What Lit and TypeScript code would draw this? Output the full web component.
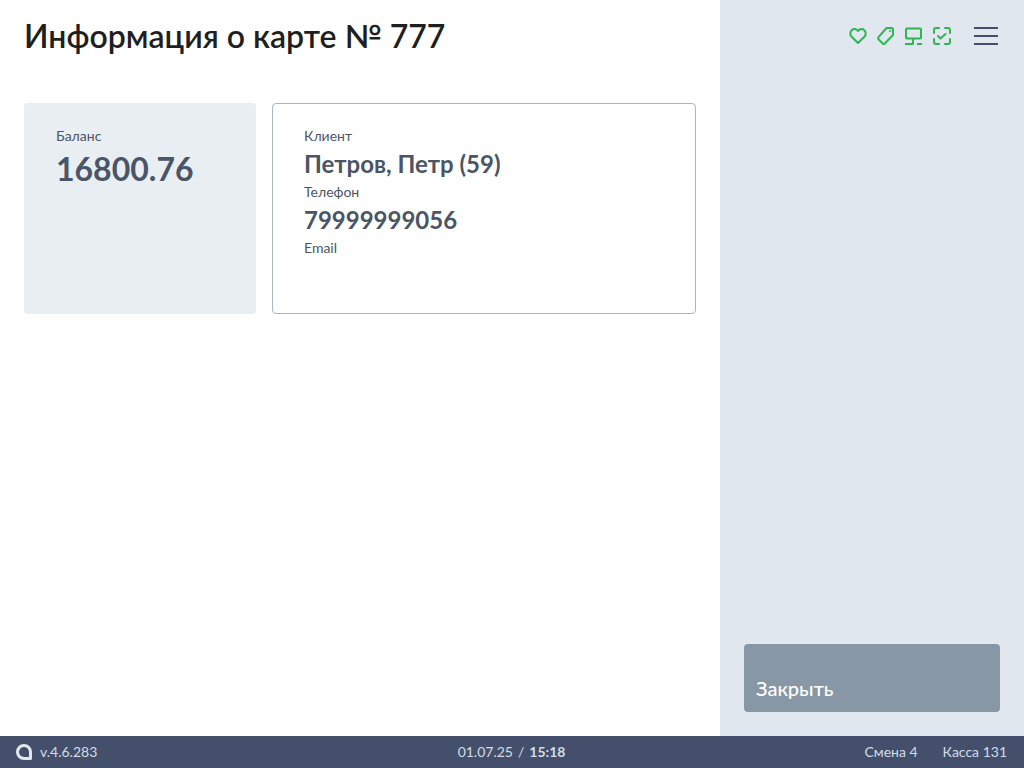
import { LitElement, html, css } from "lit";
import { customElement } from "lit/decorators.js";

@customElement("app-root")
export class AppRoot extends LitElement {
  static styles = css`
    :host { display: flex; flex-direction: column; width: 1024px; height: 768px; font-family: Lato, "Noto Sans", sans-serif; background: #fff; overflow: hidden; }
    .main { flex: 1; display: flex; min-height: 0; }
    .content { flex: 1; padding: 16px 24px; box-sizing: border-box; min-width: 0; }
    h1 { margin: 0 0 47px; font-size: 32px; line-height: 40px; font-weight: 600; color: #1f1f1f; height: 40px; }
    .cards { display: flex; gap: 16px; }
    .card { height: 211px; box-sizing: border-box; border-radius: 4px; padding: 24px 32px; color: #4a5568; }
    .balance { width: 232px; background: #e9eef2; }
    .client { flex: 1; border: 1px solid #a9b7c4; padding: 23px 31px; }
    .label { font-size: 14px; line-height: 18px; }
    .value { font-size: 24px; line-height: 38px; font-weight: 700; }
    .balance .value { font-size: 32px; line-height: 48px; }
    .side { width: 304px; background: #e0e7ef; padding: 24px 26px 24px 24px; box-sizing: border-box; display: flex; flex-direction: column; justify-content: space-between; }
    .top { display: flex; justify-content: flex-end; align-items: center; height: 24px; }
    .icons { display: flex; gap: 8px; margin-right: 22px; }
    svg { display: block; }
    .menu { display: flex; flex-direction: column; gap: 6px; width: 24px; }
    .menu i { display: block; height: 2px; background: #44506b; }
    .close { height: 68px; width: 256px; border-radius: 4px; background: #8797a5; color: #fff; font-size: 20px; line-height: 24px; padding: 32px 12px 12px; box-sizing: border-box; font-weight: 500; }
    .footer { height: 32px; background: #44506b; color: #d3dce6; font-size: 14px; line-height: 32px; display: grid; grid-template-columns: 1fr auto 1fr; align-items: start; padding: 0 17px 0 16px; }
    .ver { display: flex; align-items: center; gap: 8px; height: 32px; }
    .date b { font-weight: 700; }
    .date .sep { margin: 0 5px; }
    .right { display: flex; justify-content: flex-end; gap: 25px; }
  `;

  render() {
    return html`
      <div class="main">
        <div class="content">
          <h1>Информация о карте № 777</h1>
          <div class="cards">
            <div class="card balance">
              <div class="label">Баланс</div>
              <div class="value">16800.76</div>
            </div>
            <div class="card client">
              <div class="label">Клиент</div>
              <div class="value">Петров, Петр (59)</div>
              <div class="label">Телефон</div>
              <div class="value">79999999056</div>
              <div class="label">Email</div>
            </div>
          </div>
        </div>
        <div class="side">
          <div class="top">
            <div class="icons">
              <svg width="20" height="24" viewBox="0 0 20 24" fill="none" stroke="#2fb551" stroke-width="2" stroke-linejoin="round"><path d="M10 19 3.600 12.800C1.800 11 1.900 8 3.700 6.300 5.600 4.500 8.500 4.700 10 7 11.500 4.700 14.400 4.500 16.300 6.300 18.100 8 18.200 11 16.400 12.800Z"/></svg>
              <svg width="20" height="24" viewBox="0 0 20 24" fill="none" stroke="#2fb551" stroke-width="2" stroke-linejoin="round"><path d="M10.500 4H15.500A1.500 1.500 0 0 1 17 5.500V11L8.800 19.500A1.500 1.500 0 0 1 6.700 19.500L2.500 15.300A1.500 1.500 0 0 1 2.500 13.200Z"/><circle cx="14" cy="7" r=".6" fill="#2fb551" stroke-width="1"/></svg>
              <svg width="20" height="24" viewBox="0 0 20 24" fill="none" stroke="#2fb551" stroke-width="2" stroke-linejoin="round"><rect x="2" y="4.500" width="15" height="10" rx="1"/><path d="M9 15v5H1M13 20h5"/></svg>
              <svg width="20" height="24" viewBox="0 0 20 24" fill="none" stroke="#2fb551" stroke-width="2" stroke-linecap="round" stroke-linejoin="round"><path d="M2 9V6a2 2 0 0 1 2-2h3M13 4h3a2 2 0 0 1 2 2v3M18 15v3a2 2 0 0 1-2 2h-3M7 20H4a2 2 0 0 1-2-2v-3M6 12l2.500 2.500 5-4.500"/></svg>
            </div>
            <div class="menu"><i></i><i></i><i></i></div>
          </div>
          <div class="close">Закрыть</div>
        </div>
      </div>
      <div class="footer">
        <div class="ver">
          <svg width="16" height="16" viewBox="0 0 16 16" fill="none" stroke="#e0e7ef" stroke-width="3" stroke-linejoin="round"><path d="M14.500 14.500H8a6.500 6.500 0 1 1 6.500-6.500z"/></svg>
          <span>v.4.6.283</span>
        </div>
        <div class="date">01.07.25<span class="sep">/</span><b>15:18</b></div>
        <div class="right"><span>Смена 4</span><span>Касса 131</span></div>
      </div>
    `;
  }
}
